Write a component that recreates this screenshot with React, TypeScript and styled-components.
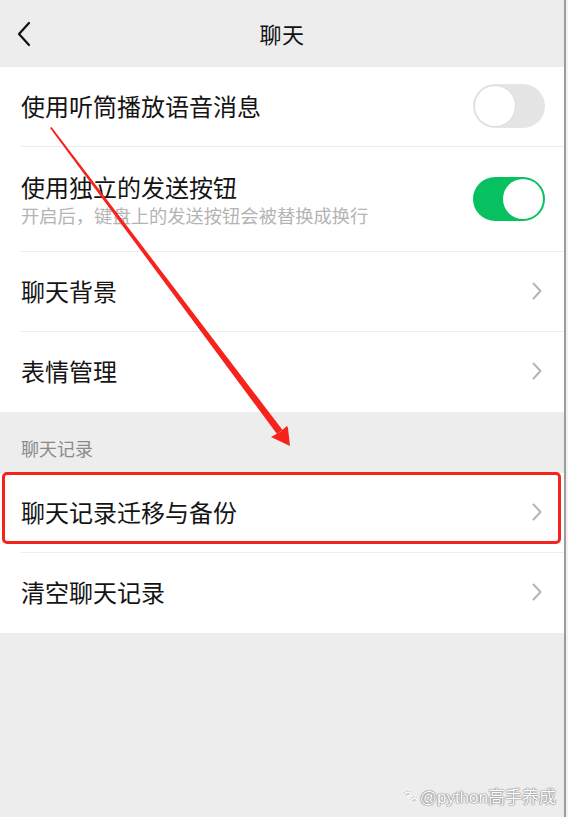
import { FC } from "react";
import styled, { createGlobalStyle } from "styled-components";

const GlobalStyle = createGlobalStyle`
  html, body {
    margin: 0;
    padding: 0;
    background: #ededed;
  }
  body {
    font-family: "Noto Sans CJK SC", "Noto Sans", sans-serif;
  }
`;

type SettingRow = {
  title: string;
  sub?: string;
  kind: "switch" | "link";
  on?: boolean;
  last?: boolean;
  marked?: boolean;
};

const topRows: SettingRow[] = [
  { title: "使用听筒播放语音消息", kind: "switch", on: false },
  {
    title: "使用独立的发送按钮",
    sub: "开启后，键盘上的发送按钮会被替换成换行",
    kind: "switch",
    on: true,
  },
  { title: "聊天背景", kind: "link" },
  { title: "表情管理", kind: "link", last: true },
];

const recordRows: SettingRow[] = [
  { title: "聊天记录迁移与备份", kind: "link", marked: true },
  { title: "清空聊天记录", kind: "link", last: true },
];

const Chevron: FC = () => (
  <svg width="10" height="18" viewBox="0 0 10 18" fill="none">
    <path d="M1.5 1.5 L8.5 9 L1.5 16.5" stroke="#b5b5b5" strokeWidth="2" strokeLinecap="round" strokeLinejoin="round" />
  </svg>
);

const BackIcon: FC = () => (
  <svg width="16" height="26" viewBox="0 0 16 26" fill="none">
    <path d="M13 2 L3 13 L13 24" stroke="#111" strokeWidth="2.2" strokeLinecap="round" strokeLinejoin="round" />
  </svg>
);

const Row: FC<{ row: SettingRow }> = ({ row }) => (
  <StRow $tall={!!row.sub} $last={!!row.last}>
    <StTexts>
      <StTitle>{row.title}</StTitle>
      {row.sub && <StSub>{row.sub}</StSub>}
    </StTexts>
    {row.kind === "switch" ? (
      <StSwitch $on={!!row.on}>
        <StKnob $on={!!row.on} />
      </StSwitch>
    ) : (
      <StChevronWrap>
        <Chevron />
      </StChevronWrap>
    )}
    {row.marked && <StMarkBox />}
  </StRow>
);

const Arrow: FC = () => (
  <StArrow width="568" height="817" viewBox="0 0 568 817">
    <polygon points="50,128 51.5,127 282.5,430 277,434" fill="#f5231c" />
    <polygon points="290,446 271,437 280,432 287,426 288,428" fill="#f5231c" />
  </StArrow>
);

const App: FC = () => (
  <>
    <GlobalStyle />
    <StFrame>
      <StPage>
        <StHeader>
          <StBack>
            <BackIcon />
          </StBack>
          <StHeaderTitle>聊天</StHeaderTitle>
        </StHeader>
        <StGroup>
          {topRows.map((r) => (
            <Row key={r.title} row={r} />
          ))}
        </StGroup>
        <StSectionLabel>聊天记录</StSectionLabel>
        <StGroup>
          {recordRows.map((r) => (
            <Row key={r.title} row={r} />
          ))}
        </StGroup>
        <StWatermark>
          <StPaw>🐾</StPaw>@python高手养成
        </StWatermark>
      </StPage>
      <StEdge />
      <Arrow />
    </StFrame>
  </>
);

export default App;

const StFrame = styled.div`
  position: relative;
  display: flex;
  width: 568px;
  height: 817px;
  overflow: hidden;
  background: #ededed;
`;

const StPage = styled.div`
  position: relative;
  width: 564px;
  display: flex;
  flex-direction: column;
`;

const StEdge = styled.div`
  width: 4px;
  border-left: 2px solid #9c9c9c;
  background: #f2f2f2;
  box-sizing: border-box;
`;

const StHeader = styled.div`
  position: relative;
  height: 67px;
  display: flex;
  align-items: center;
  justify-content: center;
  background: #ededed;
`;

const StBack = styled.div`
  position: absolute;
  left: 16px;
  top: 21px;
  display: flex;
`;

const StHeaderTitle = styled.div`
  font-size: 22px;
  color: #111;
  font-weight: 400;
  letter-spacing: 0.5px;
  margin-top: -2px;
`;

const StGroup = styled.div`
  background: #fff;
`;

const StRow = styled.div<{ $tall: boolean; $last: boolean }>`
  position: relative;
  height: ${(p) => (p.$tall ? 105 : 80)}px;
  box-sizing: border-box;
  padding: 0 19px 2px 21px;
  display: flex;
  align-items: center;
  justify-content: space-between;
  &::after {
    content: "";
    display: ${(p) => (p.$last ? "none" : "block")};
    position: absolute;
    left: 21px;
    right: 0;
    bottom: 0;
    height: 1px;
    background: #ececec;
  }
`;

const StTexts = styled.div`
  display: flex;
  flex-direction: column;
  gap: 0;
`;

const StTitle = styled.div`
  font-size: 24px;
  color: #141414;
  line-height: 32px;
`;

const StSub = styled.div`
  font-size: 18.3px;
  color: #b4b4b4;
  line-height: 24px;
`;

const StSwitch = styled.div<{ $on: boolean }>`
  width: 72px;
  height: 44px;
  border-radius: 22px;
  box-sizing: border-box;
  padding: 2px;
  display: flex;
  justify-content: ${(p) => (p.$on ? "flex-end" : "flex-start")};
  background: ${(p) => (p.$on ? "#07c160" : "#e5e5e5")};
`;

const StKnob = styled.div<{ $on: boolean }>`
  width: 40px;
  height: 40px;
  border-radius: 50%;
  background: #fff;
  box-shadow: ${(p) => (p.$on ? "none" : "0 0 0 1px #dcdcdc")};
`;

const StChevronWrap = styled.div`
  display: flex;
  padding-right: 3px;
`;

const StMarkBox = styled.div`
  position: absolute;
  left: 2px;
  right: 3px;
  top: -1px;
  height: 72px;
  border: 3px solid #f5231c;
  border-radius: 5px;
  box-sizing: border-box;
  pointer-events: none;
`;

const StSectionLabel = styled.div`
  height: 61px;
  box-sizing: border-box;
  padding: 23px 0 0 21px;
  font-size: 18px;
  line-height: 26px;
  color: #8a8a8a;
`;

const StWatermark = styled.div`
  position: absolute;
  right: 8px;
  bottom: 9px;
  display: flex;
  align-items: center;
  gap: 2px;
  font-family: "Liberation Sans", "Noto Sans CJK SC", sans-serif;
  font-size: 17px;
  color: #fff;
  text-shadow: 0 0 1px #777, 0 0 1px #777, 0 0 2px #999;
`;

const StPaw = styled.span`
  font-size: 13px;
  filter: grayscale(1) brightness(2.2);
`;

const StArrow = styled.svg`
  position: absolute;
  left: 0;
  top: 0;
  pointer-events: none;
`;
